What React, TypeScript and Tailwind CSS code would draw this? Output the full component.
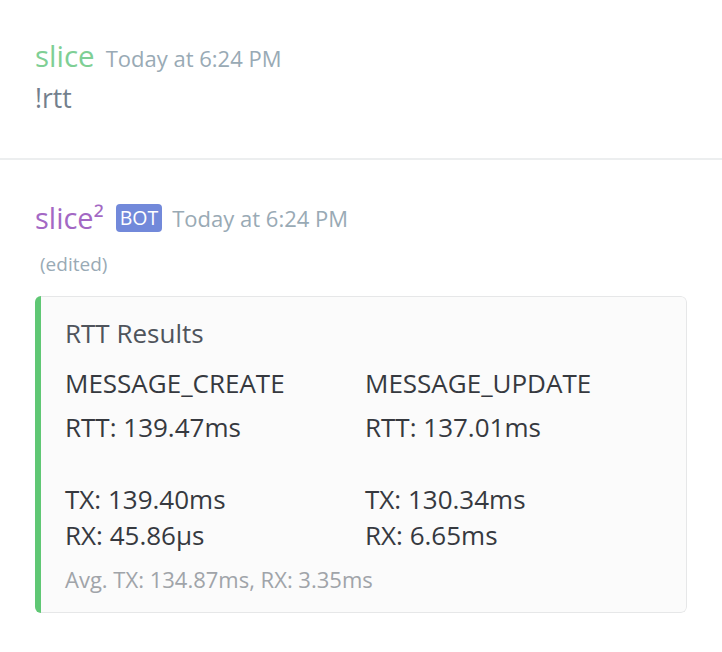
import React from "react";

export default function App() {
  return (
    <div className="w-[722px] h-[652px] bg-white overflow-hidden" style={{ fontFamily: "'Open Sans', sans-serif" }}>
      <div className="pl-[35px] pt-[34px] h-[158px]">
        <div className="flex items-baseline h-[36px]">
          <span className="text-[29.5px] text-[#7fcf95]">slice</span>
          <span className="ml-[11px] text-[22px] text-[#99aab5]">Today at 6:24 PM</span>
        </div>
        <div className="text-[26.5px] text-[#737f8d] leading-[36px] mt-[10px]">!rtt</div>
      </div>
      <div className="h-[2px] bg-[#eceeef]" />
      <div className="pl-[35px] pt-[40px]">
        <div className="flex items-center h-[36px]">
          <span className="text-[29px] text-[#a368c4]">slice²</span>
          <span className="ml-[12px] px-[4px] h-[28px] flex items-center rounded-[4px] bg-[#7289da] text-white text-[19.5px]">BOT</span>
          <span className="ml-[10px] text-[22px] text-[#99aab5]">Today at 6:24 PM</span>
        </div>
        <div className="mt-[16px] ml-[5px] text-[19px] text-[#99aab5] leading-[24px]">(edited)</div>
        <div className="mt-[20px] w-[652px] h-[317px] flex rounded-[6px] overflow-hidden">
          <div className="w-[6px] bg-[#5fc774] shrink-0" />
          <div className="flex-1 bg-[#fbfbfb] border border-l-0 border-[#e6e7e8] rounded-r-[6px] pl-[24px] pt-[20px]">
            <div className="text-[26px] text-[#4f545c] leading-[32px]">RTT Results</div>
            <div className="grid grid-cols-[300px_1fr] mt-[16px] text-[26px] text-[#36393f] leading-[36px]">
              <div>
                <div className="mb-[8px]">MESSAGE_CREATE</div>
                <div>RTT: 139.47ms</div>
                <div>&nbsp;</div>
                <div>TX: 139.40ms</div>
                <div>RX: 45.86µs</div>
              </div>
              <div>
                <div className="mb-[8px]">MESSAGE_UPDATE</div>
                <div>RTT: 137.01ms</div>
                <div>&nbsp;</div>
                <div>TX: 130.34ms</div>
                <div>RX: 6.65ms</div>
              </div>
            </div>
            <div className="mt-[12px] text-[22px] text-[#a0a4a9] leading-[28px]">Avg. TX: 134.87ms, RX: 3.35ms</div>
          </div>
        </div>
      </div>
    </div>
  );
}
